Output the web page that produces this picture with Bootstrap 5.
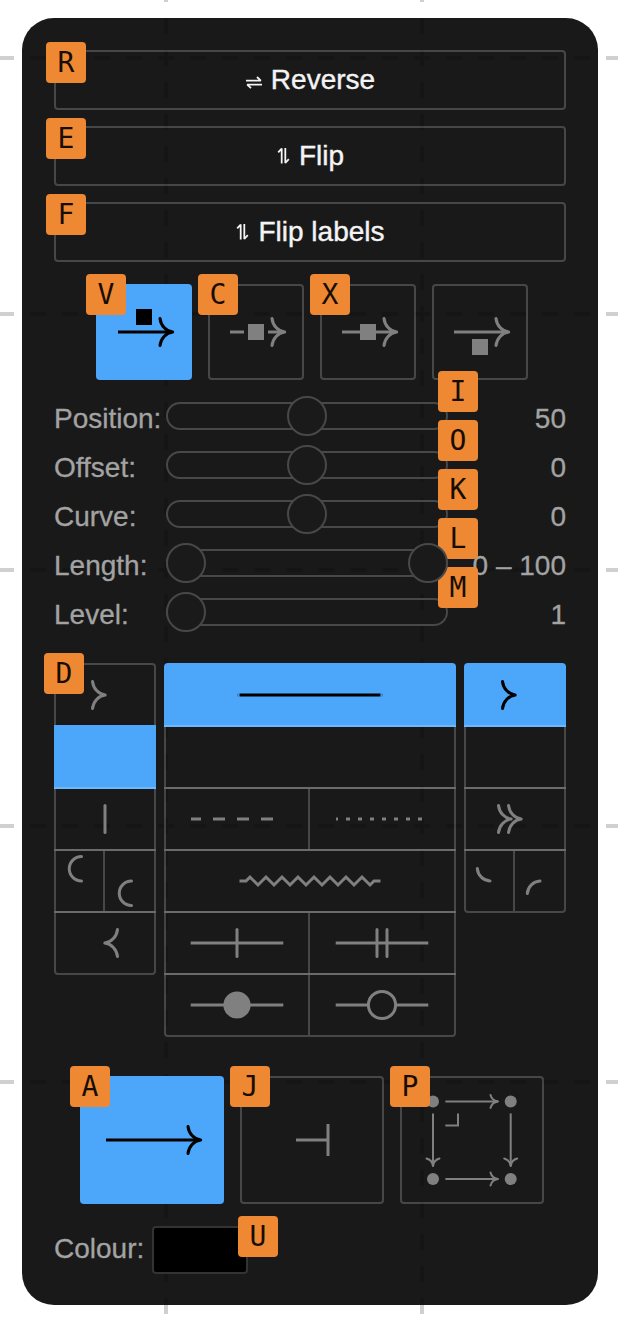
<!DOCTYPE html>
<html lang="en">
<head>
<meta charset="utf-8">
<meta name="viewport" content="width=device-width, initial-scale=1">
<title>Arrow panel</title>
<link href="https://cdn.jsdelivr.net/npm/bootstrap@5.3.0/dist/css/bootstrap.min.css" rel="stylesheet">
<style>
  body { background: #fff; font-family: "Liberation Sans", Arial, sans-serif; font-size: 28px; height: 1320px; overflow: hidden; }
  .canvas-grid { position: absolute; inset: 0; z-index: -1; }
  .panel { width: 576px; height: 1287px; margin: 18px 0 0 22px; padding: 32px; border-radius: 32px; background: rgba(0,0,0,.9); }
  .edge { border: 2px solid rgba(255,255,255,.2); border-radius: 4px; }
  .action { height: 60px; padding: 0; line-height: 56px; font-size: 28px; color: #f4f4f4; -webkit-text-stroke: .4px currentColor; }
  .action svg { flex: none; }
  .key { position: absolute; z-index: 2; left: -10px; top: -10px; width: 40px; height: 41px; border-radius: 4px; background: #ee8833; color: #180d03; font: 28px/41px "DejaVu Sans Mono", monospace; text-align: center; -webkit-text-stroke: 0; }
  .tile { position: relative; display: flex; align-items: center; justify-content: center; flex: none; color: #808080; }
  .tile .key { left: -12px; top: -12px; }
  .tile.on .key { left: -10px; top: -10px; }
  .on { background: #4ca6fa; border-color: transparent; border-width: 0; color: #000; }
  .align-tile { width: 96px; height: 96px; }
  .kind-tile { width: 144px; height: 128px; }
  .dim { color: #a3a3a3; -webkit-text-stroke: .3px currentColor; }
  .slide-row { height: 49px; line-height: 49px; }
  .slide-row .caption { width: 112px; margin-top: 2px; white-space: nowrap; }
  .slide-row .value { margin-top: 2px; white-space: nowrap; }
  .track { position: relative; width: 282px; height: 28px; margin-top: 10px; border: 2px solid #484848; border-radius: 14px; }
  .track .key { left: auto; right: -32px; top: -33px; }
  .thumb { position: absolute; z-index: 3; top: -8px; width: 40px; height: 40px; border: 2px solid #484848; border-radius: 50%; background: #1a1a1a; }
  .parts { height: 374px; }
  .side { width: 102px; }
  .middle { width: 292px; }
  .part { position: relative; display: flex; align-items: center; justify-content: center; flex: 1 1 0; height: 64px; border: 2px solid rgba(255,255,255,.2); color: #808080; }
  .part.on { border-width: 0; color: #000; }
  .part-row { display: flex; height: 64px; margin-bottom: -2px; position: relative; }
  .part-row:first-child .part { border-radius: 4px 4px 0 0; }
  .part-row:last-child .part:first-child { border-bottom-left-radius: 4px; }
  .part-row:last-child .part:last-child { border-bottom-right-radius: 4px; }
  .half-a { flex: none; width: 51px; }
  .middle .half-a { width: 146px; }
  .half-b { border-left: 0; }
  .part .key { left: -12px; top: -12px; }
  .ico { overflow: visible; fill: none; stroke: currentColor; stroke-width: 3; flex: none; display: block; }
  .rnd { stroke-linecap: round; stroke-linejoin: round; }
  .solid { fill: currentColor; stroke: none; }
  .swatch { position: relative; width: 96px; height: 48px; border: 2px solid #333; border-radius: 4px; background: #000; }
  .swatch .key { left: 84px; top: -12px; }
</style>
</head>
<body>
<svg class="canvas-grid" width="618" height="1320" stroke="#d0d0d0" stroke-width="4" stroke-dasharray="16 16">
  <path d="M-2 58H618M-2 314H618M-2 570H618M-2 826H618M-2 1082H618M166 -14V1320M422 -14V1320"/>
</svg>
<svg width="0" height="0" class="position-absolute">
  <defs>
    <path id="head" class="rnd" d="M-12.5 -13.5C-11.7 -6.5 -6.6 -.8 .2 0C-6.6 .8 -11.7 6.5 -12.5 13.5"/>
    <g id="mini"><path d="M-26.6 0H26"/><path class="rnd" d="M18.5 -6.5C19.3 -3.3 22 -.6 26 0C22 .6 19.3 3.3 18.5 6.5"/></g>
  </defs>
</svg>

<main class="panel">
  <div class="d-grid gap-3">
    <button class="btn edge action position-relative d-flex justify-content-center align-items-center"><span class="key">R</span>
      <svg width="26" height="20" viewBox="0 0 26 20" fill="none" stroke="currentColor" stroke-width="1.8" stroke-linejoin="bevel"><path d="M1 10.6H15.8L12 7M17 14.6H2.2L6 18.2"/></svg>Reverse</button>
    <button class="btn edge action position-relative d-flex justify-content-center align-items-center"><span class="key">E</span>
      <svg width="23" height="20" viewBox="0 0 23 20" fill="none" stroke="currentColor" stroke-width="1.8" stroke-linejoin="bevel"><path d="M5.7 17.6V2.6L2.2 6.4M9.3 2V17L12.8 13.2"/></svg>Flip</button>
    <button class="btn edge action position-relative d-flex justify-content-center align-items-center"><span class="key">F</span>
      <svg width="23" height="20" viewBox="0 0 23 20" fill="none" stroke="currentColor" stroke-width="1.8" stroke-linejoin="bevel"><path d="M5.7 17.6V2.6L2.2 6.4M9.3 2V17L12.8 13.2"/></svg>Flip labels</button>
  </div>

  <div class="d-flex gap-3" style="margin:22px 0 0 42px">
    <div class="tile edge align-tile on"><span class="key">V</span>
      <svg class="ico" width="60" height="60" viewBox="-30 -30 60 60"><path d="M-26 0H28"/><use href="#head" x="28.5"/><path class="solid" d="M-8 -23h16v16h-16z"/></svg></div>
    <div class="tile edge align-tile"><span class="key">C</span>
      <svg class="ico" width="60" height="60" viewBox="-30 -30 60 60"><path d="M-26 0H-12M12 0H28"/><use href="#head" x="28.5"/><path class="solid" d="M-8 -8h16v16h-16z"/></svg></div>
    <div class="tile edge align-tile"><span class="key">X</span>
      <svg class="ico" width="60" height="60" viewBox="-30 -30 60 60"><path d="M-26 0H28"/><use href="#head" x="28.5"/><path class="solid" d="M-8 -8h16v16h-16z"/></svg></div>
    <div class="tile edge align-tile">
      <svg class="ico" width="60" height="60" viewBox="-30 -30 60 60"><path d="M-26 0H28"/><use href="#head" x="28.5"/><path class="solid" d="M-8 7h16v16h-16z"/></svg></div>
  </div>

  <div class="dim" style="margin-top:12px">
    <div class="slide-row d-flex align-items-start"><span class="caption">Position:</span><div class="track"><span class="thumb" style="left:119px"></span><span class="key">I</span></div><span class="value ms-auto">50</span></div>
    <div class="slide-row d-flex align-items-start"><span class="caption">Offset:</span><div class="track"><span class="thumb" style="left:119px"></span><span class="key">O</span></div><span class="value ms-auto">0</span></div>
    <div class="slide-row d-flex align-items-start"><span class="caption">Curve:</span><div class="track"><span class="thumb" style="left:119px"></span><span class="key">K</span></div><span class="value ms-auto">0</span></div>
    <div class="slide-row d-flex align-items-start"><span class="caption">Length:</span><div class="track"><span class="thumb" style="left:-2px"></span><span class="thumb" style="left:240px"></span><span class="key">L</span></div><span class="value ms-auto">0 – 100</span></div>
    <div class="slide-row d-flex align-items-start"><span class="caption">Level:</span><div class="track"><span class="thumb" style="left:-2px"></span><span class="key">M</span></div><span class="value ms-auto">1</span></div>
  </div>

  <div class="parts d-flex gap-2 align-items-start" style="margin-top:26px">
    <div class="side">
      <div class="part-row"><div class="part"><span class="key">D</span><svg class="ico" width="40" height="40" viewBox="-20 -20 40 40"><use href="#head"/></svg></div></div>
      <div class="part-row"><div class="part on"></div></div>
      <div class="part-row"><div class="part"><svg class="ico rnd" width="40" height="40" viewBox="-20 -20 40 40"><path d="M0 -13.5V13.5"/></svg></div></div>
      <div class="part-row">
        <div class="part half-a"><svg class="ico rnd" width="40" height="60" viewBox="-20 -30 40 60"><path d="M1.5 -24.5A12.2 12.2 0 0 0 1.5 0"/></svg></div>
        <div class="part half-b"><svg class="ico rnd" width="40" height="60" viewBox="-20 -30 40 60"><path d="M1.5 0A12.2 12.2 0 0 0 1.5 24.5"/></svg></div>
      </div>
      <div class="part-row"><div class="part"><svg class="ico" width="40" height="40" viewBox="-20 -20 40 40"><use href="#head" transform="scale(-1 1)"/></svg></div></div>
    </div>
    <div class="middle">
      <div class="part-row"><div class="part on"><svg class="ico" width="150" height="40" viewBox="-75 -20 150 40"><path d="M-70.5 0H70.5"/><path opacity=".3" d="M-72.7 0h1M71.7 0h1"/></svg></div></div>
      <div class="part-row"><div class="part"></div></div>
      <div class="part-row">
        <div class="part half-a"><svg class="ico" width="100" height="40" viewBox="-50 -20 100 40"><path stroke-dasharray="12 12" stroke-dashoffset="2" d="M-46 0H46"/></svg></div>
        <div class="part half-b"><svg class="ico" width="100" height="40" viewBox="-50 -20 100 40"><path stroke-dasharray="4 8" stroke-dashoffset="2" d="M-46 0H46"/></svg></div>
      </div>
      <div class="part-row"><div class="part"><svg class="ico" width="150" height="40" viewBox="-75 -20 150 40"><path d="M-70.5 0H-64l4 -4l8 8l8 -8l8 8l8 -8l8 8l8 -8l8 8l8 -8l8 8l8 -8l8 8l8 -8l8 8l8 -8l8 8l4 -4H70.5"/></svg></div></div>
      <div class="part-row">
        <div class="part half-a"><svg class="ico" width="100" height="40" viewBox="-50 -20 100 40"><path d="M-46.3 0H46.3"/><path class="rnd" d="M0 -13.5V13.5"/></svg></div>
        <div class="part half-b"><svg class="ico" width="100" height="40" viewBox="-50 -20 100 40"><path d="M-46.3 0H46.3"/><path class="rnd" d="M-5 -13.5V13.5M5 -13.5V13.5"/></svg></div>
      </div>
      <div class="part-row">
        <div class="part half-a"><svg class="ico" width="100" height="40" viewBox="-50 -20 100 40"><path d="M-46.3 0H46.3"/><circle class="solid" r="13.6"/></svg></div>
        <div class="part half-b"><svg class="ico" width="100" height="40" viewBox="-50 -20 100 40"><path d="M-46.3 0H-13.5M13.5 0H46.3"/><circle r="13.6"/></svg></div>
      </div>
    </div>
    <div class="side">
      <div class="part-row"><div class="part on"><svg class="ico" width="40" height="40" viewBox="-20 -20 40 40"><use href="#head"/></svg></div></div>
      <div class="part-row"><div class="part"></div></div>
      <div class="part-row"><div class="part"><svg class="ico" width="40" height="40" viewBox="-20 -20 40 40"><use href="#head" x="-4"/><use href="#head" x="6"/></svg></div></div>
      <div class="part-row">
        <div class="part half-a"><svg class="ico rnd" width="40" height="40" viewBox="-20 -20 40 40"><path d="M-12.7 -12.5C-12 -5.5 -7 -.5 0 0"/></svg></div>
        <div class="part half-b"><svg class="ico rnd" width="40" height="40" viewBox="-20 -20 40 40"><path d="M0 0C-7 .5 -12 5.5 -12.7 12.5"/></svg></div>
      </div>
    </div>
  </div>

  <div class="d-flex gap-3" style="margin:39px 0 0 26px">
    <div class="tile edge kind-tile on"><span class="key">A</span>
      <svg class="ico" width="110" height="60" viewBox="-55 -30 110 60"><path d="M-46 0H48"/><use href="#head" x="48.5"/></svg></div>
    <div class="tile edge kind-tile"><span class="key">J</span>
      <svg class="ico" width="60" height="60" viewBox="-30 -30 60 60"><path d="M-16 0H16M16 -16V16"/></svg></div>
    <div class="tile edge kind-tile"><span class="key">P</span>
      <svg class="ico" width="100" height="100" viewBox="-50 -50 100 100" style="stroke-width:2">
        <g class="solid"><circle cx="-39" cy="-38.6" r="6"/><circle cx="38.7" cy="-38.6" r="6"/><circle cx="-39" cy="39" r="6"/><circle cx="38.7" cy="39" r="6"/></g>
        <use href="#mini" y="-38.6"/><use href="#mini" y="39"/>
        <use href="#mini" transform="translate(-39 0) rotate(90)"/><use href="#mini" transform="translate(38.7 0) rotate(90)"/>
        <path d="M-14 -26.5V-14.5H-26.7"/>
      </svg></div>
  </div>

  <div class="d-flex dim" style="margin-top:22px">
    <span style="width:98px;line-height:45px">Colour:</span>
    <div class="swatch"><span class="key">U</span></div>
  </div>
</main>
<script src="https://cdn.jsdelivr.net/npm/bootstrap@5.3.0/dist/js/bootstrap.bundle.min.js"></script>
</body>
</html>
